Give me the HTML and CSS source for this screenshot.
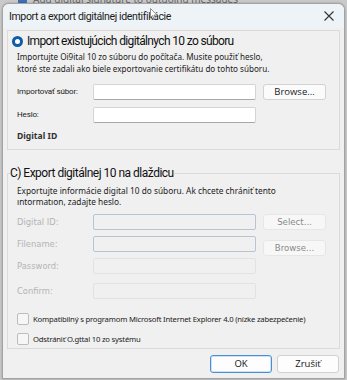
FILE: index.html
```html
<!DOCTYPE html>
<html>
<head>
<meta charset="utf-8">
<link rel="stylesheet" href="styles.css">
</head>
<body>
<div class="behind"><span class="bcheck"></span><span class="btext">Add digital signature to outgoing messages</span></div>
<div class="window">
  <div class="titlebar">
    <span class="title">Import a export digitálnej identifikácie</span>
    <svg class="close" width="12" height="12" viewBox="0 0 12 12"><path d="M1.5 1.5 L10.5 10.5 M10.5 1.5 L1.5 10.5" stroke="#333" stroke-width="1.1" fill="none"/></svg>
  </div>
  <div class="content">
    <div class="group g1">
      <div class="gtitle"><span class="radio"></span><span>Import existujúcich digitálnych 10 zo súboru</span></div>
      <p class="desc">Importujte Oi9ital 10 zo súboru do počítača. Musite použiť heslo,<br>ktoré ste zadali ako biele exportovanie certifikátu do tohto súboru.</p>
      <div class="row r1"><span class="label">Importovať súbor:</span><span class="input"></span><span class="btn">Browse...</span></div>
      <div class="row r2"><span class="label">Heslo:</span><span class="input"></span></div>
      <div class="bold">Digital ID</div>
    </div>
    <fieldset class="group g2">
      <legend class="gtitle2">C) Export digitálnej 10 na dlaždicu</legend>
      <p class="desc d2">Exportujte informácie digital 10 do súboru. Ak chcete chrániť tento<br>ıntormatıon, zadajte heslo.</p>
      <div class="row dis r3"><span class="label">Digital ID:</span><span class="input blue"></span><span class="btn dbtn">Select...</span></div>
      <div class="row dis r4"><span class="label">Filename:</span><span class="input blue"></span><span class="btn dbtn low">Browse...</span></div>
      <div class="row dis r5"><span class="label">Password:</span><span class="input off"></span></div>
      <div class="row dis r6"><span class="label">Confirm:</span><span class="input off"></span></div>
      <div class="check c1"><span class="box"></span><span>Kompatibilný s programom Microsoft Internet Explorer 4.0 (nízke zabezpečenie)</span></div>
      <div class="check c2"><span class="box"></span><span>Odstrániť O.gttal 10 zo systému</span></div>
    </fieldset>
    <div class="actions"><span class="abtn ok">OK</span><span class="abtn">Zrušiť</span></div>
  </div>
</div>
<svg class="cursor" width="8" height="12" viewBox="0 0 8 12"><path d="M0.5 0.5 L0.5 9.5 L2.6 7.6 L4.2 11 L5.5 10.4 L4 7.1 L7 7.1 Z" fill="#fff" stroke="#777" stroke-width="0.8"/></svg>
</body>
</html>
```
FILE: styles.css
```css
html, body { margin: 0; padding: 0; }
body {
  width: 347px; height: 380px; overflow: hidden;
  background: #c9c9c9;
  font-family: "Noto Sans", "Open Sans", sans-serif;
  color: #1a1a1a;
  position: relative;
}
.behind {
  position: absolute; left: 0; top: -7px; width: 330px; height: 12px;
  display: flex; align-items: center; gap: 6px; padding-left: 18px;
  font-size: 10px; line-height: 12px; color: #666;
}
.bcheck { width: 9px; height: 9px; background: #3b6fb6; border-radius: 2px; }
.window {
  position: relative;
  margin: 3px 2px 0 2px;
  height: 374px;
  border: 1px solid #a3a3a3;
  border-radius: 7px 7px 0 0;
  background: #f0f0f0;
  overflow: hidden;
  box-shadow: 0 0 2px rgba(0,0,0,0.3);
}
.titlebar {
  height: 24px; background: #eef3f8;
  display: flex; align-items: center; justify-content: space-between;
  padding: 0 9px 0 6px;
}
.title { font-family: Roboto, sans-serif; font-size: 10.6px; letter-spacing: -0.4px; color: #1b1b1b; }
.close { display: block; }
.cursor { position: absolute; left: 150px; top: 8px; }
.content { padding: 2px 4px 0 4px; }
.group {
  border: 1px solid #dadada;
  margin: 0;
}
.g1 { padding: 0 0 7px 9px; }
.gtitle {
  display: flex; align-items: center; gap: 4px;
  margin: 2px 0 0 -5px; height: 16px;
  font-family: Roboto, sans-serif;
  font-size: 12px; letter-spacing: -0.65px; color: #111;
}
.radio {
  width: 11px; height: 11px; border-radius: 50%;
  background: #0f5ca8; position: relative; flex: none;
}
.radio::after {
  content: ""; position: absolute; left: 3px; top: 3px;
  width: 5px; height: 5px; border-radius: 50%; background: #fff;
}
.desc {
  margin: 2px 0 0 0; font-size: 8.1px; line-height: 12px;
  color: #222;
}
.row { display: flex; align-items: flex-start; height: 16px; }
.label { width: 76px; flex: none; font-family: Roboto, sans-serif; font-size: 8px; letter-spacing: -0.15px; line-height: 16px; color: #222; }
.input {
  width: 161px; height: 14px; flex: none;
  background: #fff; border: 1px solid #d4d4d4; border-bottom-color: #a8a8a8;
  border-radius: 2px;
}
.btn {
  margin-left: 7px; width: 61px; height: 14px; flex: none;
  background: #fbfbfb; border: 1px solid #d2d2d2; border-radius: 3px;
  font-size: 9.5px; line-height: 14px; text-align: center; color: #222;
  font-family: "Open Sans", sans-serif;
}
.r1 { margin-top: 9px; }
.r2 { margin-top: 7px; }
.bold { margin-top: 7px; font-size: 8.6px; line-height: 12px; font-weight: bold; color: #333; }
.g2 { padding: 0 0 3px 9px; margin-top: 15px; min-width: 0; }
.gtitle2 {
  padding: 0; margin-left: -7px; font-family: Roboto, sans-serif; font-size: 12px; letter-spacing: -0.5px;
  color: #111; line-height: 16px;
}
.d2 { margin-top: 4px; font-size: 8.3px; line-height: 11px; }
.dis .label { color: #b4b4b4; font-family: "DejaVu Sans", sans-serif; font-size: 8.4px; letter-spacing: 0; }
.input.blue { background: #f0f0f0; border: 1px solid #b6c4d4; }
.input.off { background: #f0f0f0; border: 1px solid #e2e2e2; }
.dbtn { color: #8a8a8a; background: #f7f7f7; border-color: #e6e6e6; font-family: "DejaVu Sans", sans-serif; font-size: 8.6px; }
.low { margin-top: 4px; }
.r3 { margin-top: 7px; }
.r4 { margin-top: 6px; }
.r5 { margin-top: 6px; }
.r6 { margin-top: 9px; }
.check { display: flex; align-items: center; gap: 4px; font-size: 7.7px; color: #222; height: 12px; letter-spacing: -0.2px; }
.box { width: 10px; height: 10px; border: 1px solid #bdbdbd; border-radius: 2px; background: #f6f6f6; flex: none; }
.c1 { margin-top: 14px; }
.c2 { margin-top: 8px; }
.actions { display: flex; justify-content: flex-end; gap: 5px; margin-top: 6px; padding-right: 1px; }
.abtn {
  width: 60px; height: 16px; border: 1px solid #d0d0d0; border-radius: 3px;
  background: #fdfdfd; font-size: 9.5px; line-height: 16px; text-align: center;
  color: #111; font-family: "Open Sans", sans-serif;
}
.ok { border-color: #4a8fd3; box-shadow: inset 0 0 0 1px #cfe2f5; }
```
